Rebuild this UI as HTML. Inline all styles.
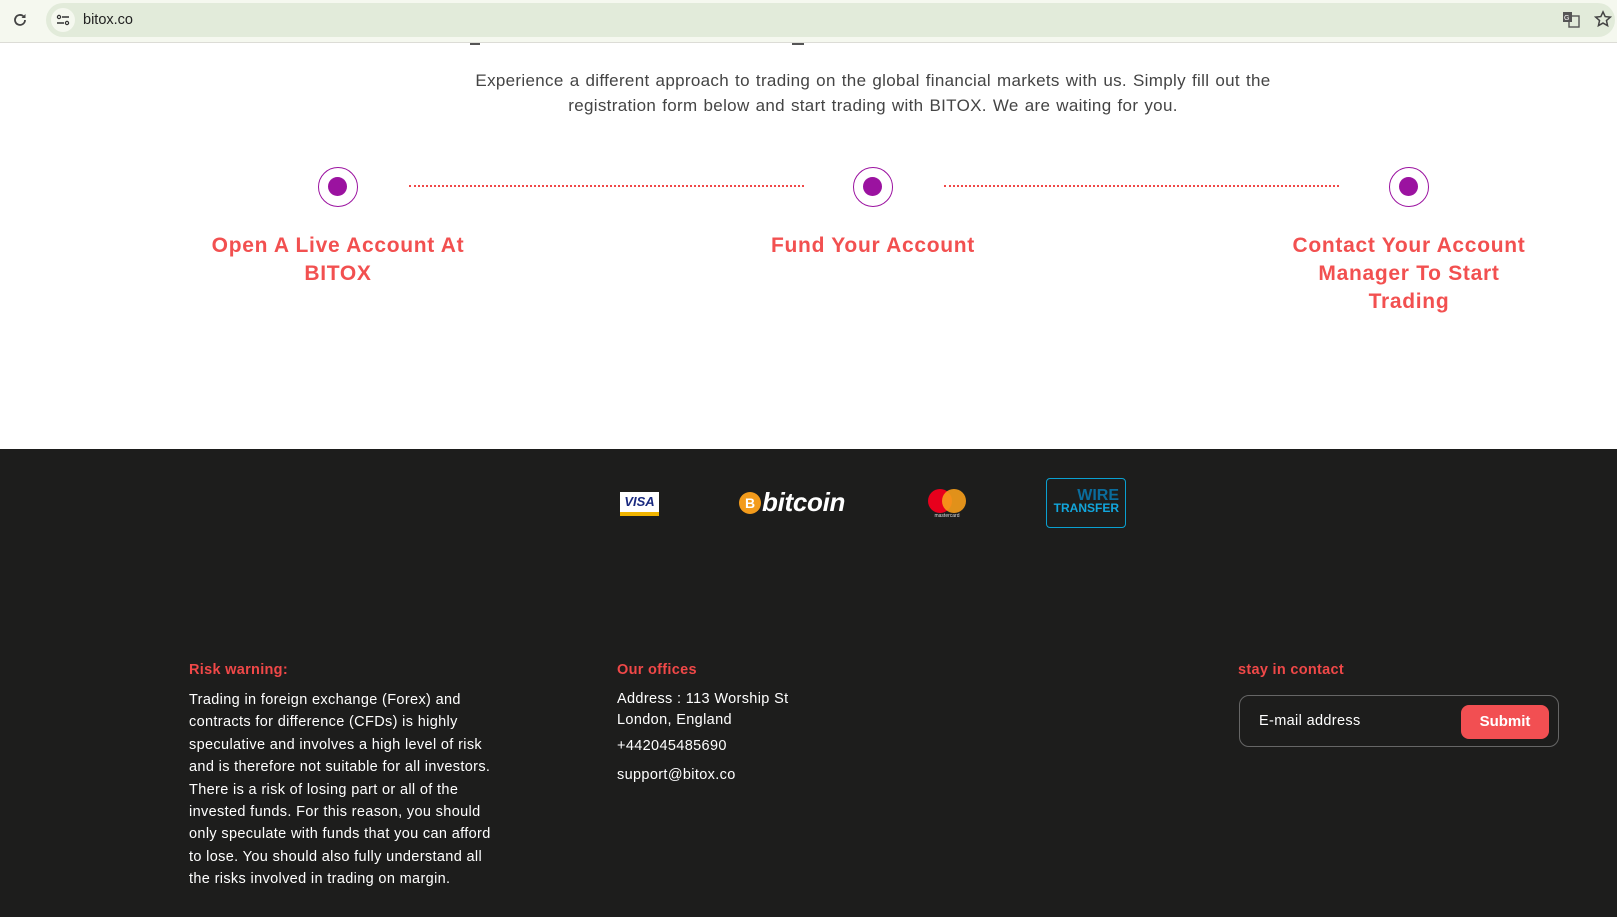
<!DOCTYPE html>
<html><head><meta charset="utf-8"><style>
*{margin:0;padding:0;box-sizing:border-box}
body{width:1617px;height:917px;overflow:hidden;background:#fff;font-family:"Liberation Sans",sans-serif;position:relative}
.abs{position:absolute}
.bar{left:0;top:0;width:1617px;height:43px;background:#f5f8ef;border-bottom:1px solid #dcdcd6}
.addr{left:46px;top:3px;width:1569px;height:34px;background:#e2ebda;border-radius:17px}
.sub{left:73px;width:1600px;text-align:center;color:#444;font-size:17px;letter-spacing:0.32px;word-spacing:1px}
.circ{width:40px;height:40px;border:1.5px solid #9b12a0;border-radius:50%}
.circ:after{content:"";position:absolute;left:9px;top:9px;width:19px;height:19px;border-radius:50%;background:#9b12a0}
.dots{height:0;border-top:2px dotted #f04848}
.t{color:#f25050;font-weight:bold;font-size:21px;line-height:28px;text-align:center;width:300px;letter-spacing:0.7px}
.foot{left:0;top:449px;width:1617px;height:468px;background:#1d1d1c}
.h{color:#f04848;font-weight:bold;font-size:14.5px;letter-spacing:0.3px}
.w{color:#fff;font-size:14.5px;letter-spacing:0.35px}
</style></head><body>
<div class="abs bar"></div>
<div class="abs addr"></div>
<svg class="abs" style="left:11px;top:11px" width="18" height="18" viewBox="0 0 18 18"><path d="M14 9a5 5 0 1 1-1.5-3.6" fill="none" stroke="#444" stroke-width="1.8"/><path d="M14.5 3v4h-4z" fill="#444"/></svg>
<div class="abs" style="left:51px;top:8px;width:24px;height:24px;border-radius:50%;background:#f5f8ef"></div>
<svg class="abs" style="left:56px;top:13px" width="14" height="14" viewBox="0 0 14 14"><circle cx="3" cy="4" r="1.6" fill="none" stroke="#333" stroke-width="1.2"/><path d="M6 4h7M1 10h7" stroke="#333" stroke-width="1.4"/><circle cx="11" cy="10" r="1.6" fill="none" stroke="#333" stroke-width="1.2"/></svg>
<div class="abs" style="left:83px;top:12px;font-size:14.5px;color:#222">bitox.co</div>
<svg class="abs" style="left:1562px;top:10px" width="18" height="18" viewBox="0 0 18 18"><rect x="1" y="2" width="9" height="10" fill="#555"/><rect x="7" y="6" width="10" height="11" fill="none" stroke="#555" stroke-width="1.4"/><text x="2" y="10" font-size="7" fill="#fff" font-family="Liberation Sans">G</text></svg>
<svg class="abs" style="left:1594px;top:10px" width="18" height="18" viewBox="0 0 24 24"><path d="M12 2.5l2.9 6.3 6.8.7-5.1 4.6 1.5 6.8L12 17.4l-6.1 3.5 1.5-6.8L2.3 9.5l6.8-.7z" fill="none" stroke="#444" stroke-width="2"/></svg>
<div class="abs" style="left:470px;top:43px;width:10px;height:2px;background:#555"></div>
<div class="abs" style="left:792px;top:43px;width:12px;height:2px;background:#555"></div>
<div class="abs sub" style="top:71px">Experience a different approach to trading on the global financial markets with us. Simply fill out the</div>
<div class="abs sub" style="top:96px">registration form below and start trading with BITOX. We are waiting for you.</div>
<div class="abs circ" style="left:318px;top:167px"></div>
<div class="abs circ" style="left:853px;top:167px"></div>
<div class="abs circ" style="left:1389px;top:167px"></div>
<div class="abs dots" style="left:409px;top:185px;width:395px"></div>
<div class="abs dots" style="left:944px;top:185px;width:395px"></div>
<div class="abs t" style="left:188px;top:232px">Open A Live Account At BITOX</div>
<div class="abs t" style="left:723px;top:232px">Fund Your Account</div>
<div class="abs t" style="left:1279px;top:232px;width:260px">Contact Your Account Manager To Start Trading</div>
<div class="abs foot"></div>
<div class="abs" style="left:620px;top:492px;width:39px;height:24px;background:#fff;border-bottom:4px solid #f0b400"><div style="color:#1a2a80;font-weight:bold;font-style:italic;font-size:13px;text-align:center;line-height:19px">VISA</div></div>
<div class="abs" style="left:739px;top:492px;width:22px;height:22px;border-radius:50%;background:#f39b1b;color:#fff;font-weight:bold;font-size:14px;text-align:center;line-height:22px">B</div>
<div class="abs" style="left:762px;top:487px;color:#fff;font-weight:bold;font-style:italic;font-size:26px;line-height:30px;letter-spacing:-0.3px">bitcoin</div>
<div class="abs" style="left:928px;top:489px;width:24px;height:24px;border-radius:50%;background:#e8001c"></div>
<div class="abs" style="left:942px;top:489px;width:24px;height:24px;border-radius:50%;background:#f79e1b;opacity:.9"></div>
<div class="abs" style="left:928px;top:513px;width:38px;color:#ddd;font-size:5px;text-align:center">mastercard</div>
<div class="abs" style="left:1046px;top:478px;width:80px;height:50px;border:1.5px solid #0aa0d0;border-radius:4px;text-align:right;padding-right:6px;font-weight:bold;line-height:13px;padding-top:10px"><div style="color:#0a6c9c;font-size:16px">WIRE</div><div style="color:#12a6dc;font-size:12px">TRANSFER</div></div>
<div class="abs h" style="left:189px;top:662px">Risk warning:</div>
<div class="abs w" style="left:189px;top:689px;width:314px;line-height:22.4px">Trading in foreign exchange (Forex) and contracts for difference (CFDs) is highly speculative and involves a high level of risk and is therefore not suitable for all investors. There is a risk of losing part or all of the invested funds. For this reason, you should only speculate with funds that you can afford to lose. You should also fully understand all the risks involved in trading on margin.</div>
<div class="abs h" style="left:617px;top:662px">Our offices</div>
<div class="abs w" style="left:617px;top:689px;line-height:21px">Address : 113 Worship St<br>London, England</div>
<div class="abs w" style="left:617px;top:738px">+442045485690</div>
<div class="abs w" style="left:617px;top:767px">support@bitox.co</div>
<div class="abs h" style="left:1238px;top:662px">stay in contact</div>
<div class="abs" style="left:1239px;top:695px;width:320px;height:52px;border:1px solid #666;border-radius:10px"></div>
<div class="abs w" style="left:1259px;top:713px">E-mail address</div>
<div class="abs" style="left:1461px;top:705px;width:88px;height:34px;background:#f24f52;border-radius:8px;color:#fff;font-weight:bold;font-size:15px;text-align:center;line-height:34px">Submit</div>
</body></html>
